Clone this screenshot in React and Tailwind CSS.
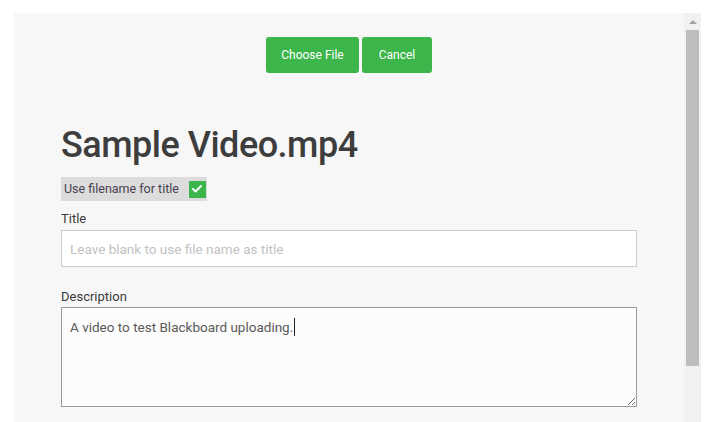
import { Check } from "lucide-react";

export default function App() {
  return (
    <div className="flex h-[422px] w-[711px] overflow-hidden bg-white pl-[14px] pr-[10px] pt-[13px] font-['Roboto',sans-serif]">
      {/* Panel */}
      <div className="flex-1 bg-[#f7f7f7] pl-[47px] pr-[47px]">
        <div className="flex justify-center gap-[3px] pt-[24px]">
          <button className="h-[36px] w-[93px] rounded-[3px] bg-[#3cb64b] text-[12px] text-white">
            Choose File
          </button>
          <button className="h-[36px] w-[70px] rounded-[3px] bg-[#3cb64b] text-[12px] text-white">
            Cancel
          </button>
        </div>

        <h1 className="mt-[50px] text-[36px] font-medium leading-[44px] tracking-[-0.5px] text-[#3d3d3d]">
          Sample Video.mp4
        </h1>

        <div className="mt-[10px] flex h-[24px] w-[146px] items-center gap-[10px] bg-[#dcdcdc] pl-[3px]">
          <span className="text-[12.5px] text-[#4a3f52]">Use filename for title</span>
          <span className="flex h-[17px] w-[17px] items-center justify-center bg-[#3cb64b]">
            <Check className="h-[12px] w-[12px] text-white" strokeWidth={4} />
          </span>
        </div>

        <div className="mt-[9px] text-[13px] leading-[18px] text-[#3a3a3a]">Title</div>
        <input
          className="mt-[2px] block h-[37px] w-[576px] border border-[#cccccc] bg-white px-[8px] text-[13.5px] text-[#555] outline-none placeholder:text-[#c2c2c2]"
          placeholder="Leave blank to use file name as title"
        />

        <div className="mt-[21px] text-[13px] leading-[18px] text-[#3a3a3a]">Description</div>
        <div className="relative mt-[1px] w-[576px]">
          <textarea
            className="block h-[100px] w-[576px] border border-[#999999] bg-[#fcfcfc] px-[8px] pt-[9px] text-[13.5px] text-[#5a5a5a] outline-none"
            defaultValue="A video to test Blackboard uploading."
          />
          {/* text caret */}
          <span className="pointer-events-none absolute left-[233px] top-[11px] h-[18px] w-px bg-[#222]" />
        </div>
      </div>

      {/* Scrollbar */}
      <div className="flex w-[17px] flex-col items-center bg-[#f1f1f1]">
        <div className="flex h-[17px] items-center justify-center">
          <div className="h-0 w-0 border-x-[4px] border-b-[4px] border-x-transparent border-b-[#a3a3a3]" />
        </div>
        <div className="h-[336px] w-[13px] bg-[#bdbdbd]" />
      </div>
    </div>
  );
}
